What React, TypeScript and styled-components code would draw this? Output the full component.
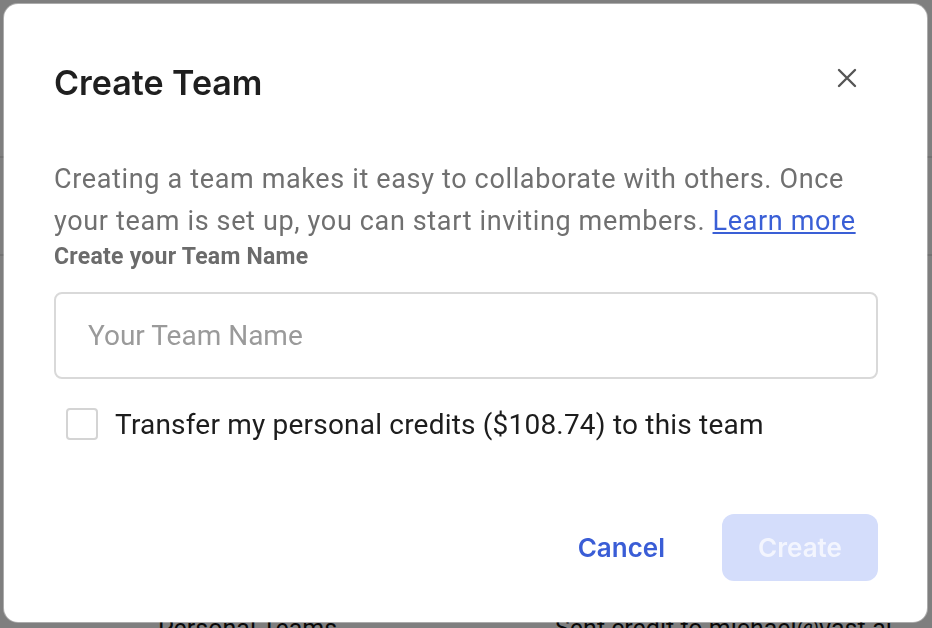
import React from "react";
import styled, { createGlobalStyle } from "styled-components";

const GlobalStyle = createGlobalStyle`
  html, body {
    margin: 0;
    padding: 0;
    background: #ffffff;
    overflow: hidden;
  }
  * { box-sizing: border-box; }
`;

// page behind the dialog (mostly hidden by overlay)
const Page = styled.div`
  width: 932px;
  height: 628px;
  overflow: hidden;
  font-family: Roboto, "Liberation Sans", sans-serif;
  color: #111;
`;

const PageDivider = styled.div<{ $top: number }>`
  margin-top: ${(p) => p.$top}px;
  border-top: 2px solid #e4e4e4;
`;

const PageRow = styled.div`
  display: grid;
  grid-template-columns: 397px 1fr;
  padding: 0 0 0 158px;
  margin-top: 358px;
  font-size: 25px;
  line-height: 30px;
`;

const Overlay = styled.div`
  position: fixed;
  inset: 0;
  background: rgba(0, 0, 0, 0.5);
  padding: 4px 0 0 4px;
  display: flex;
  align-items: flex-start;
`;

const Dialog = styled.div`
  width: 923px;
  height: 618px;
  background: #fff;
  border-radius: 14px;
  box-shadow: 0 0 0 1px rgba(255, 255, 255, 0.35);
  display: flex;
  flex-direction: column;
  padding: 55px 49px 41px 50px;
`;

const Header = styled.div`
  display: flex;
  justify-content: space-between;
  align-items: flex-start;
`;

const Title = styled.h2`
  margin: 0;
  font-family: Inter, "Noto Sans", sans-serif;
  font-weight: 600;
  font-size: 34px;
  line-height: 48px;
  color: #1f1f1f;
`;

const CloseButton = styled.button`
  border: none;
  background: none;
  padding: 0;
  margin: 5px 17px 0 0;
  width: 28px;
  height: 28px;
  display: flex;
  align-items: center;
  justify-content: center;
  cursor: pointer;
`;

const Description = styled.p`
  margin: 51px 0 0;
  font-family: Roboto, "Liberation Sans", sans-serif;
  font-size: 27px;
  line-height: 42px;
  letter-spacing: 0.65px;
  color: #707070;
`;

const LearnMore = styled.a`
  color: #3a5fd6;
  text-decoration: underline;
  text-underline-offset: 2px;
`;

const FieldLabel = styled.label`
  display: block;
  font-family: Roboto, "Liberation Sans", sans-serif;
  font-weight: 700;
  font-size: 23px;
  line-height: 30px;
  letter-spacing: 0.25px;
  color: #6b6b6b;
`;

const TextInput = styled.input`
  display: block;
  margin-top: 20px;
  width: 824px;
  height: 87px;
  border: 2px solid #d9d9d9;
  border-radius: 8px;
  padding: 0 32px;
  font-family: Roboto, "Liberation Sans", sans-serif;
  font-size: 28px;
  color: #222;
  outline: none;
  &::placeholder {
    color: #9a9a9a;
  }
`;

const CheckRow = styled.label`
  display: flex;
  align-items: center;
  gap: 17px;
  margin-top: 25px;
  padding-left: 12px;
  height: 40px;
  font-family: Roboto, "Liberation Sans", sans-serif;
  font-size: 28px;
  letter-spacing: 0.2px;
  color: #1d1d1d;
`;

const CheckBox = styled.span`
  width: 32px;
  height: 32px;
  border: 2px solid #d4d4d4;
  border-radius: 4px;
  flex-shrink: 0;
`;

const Footer = styled.div`
  margin-top: auto;
  display: flex;
  justify-content: flex-end;
  align-items: center;
  gap: 49px;
`;

const Button = styled.button<{ $primary?: boolean }>`
  font-family: Inter, "Noto Sans", sans-serif;
  font-weight: 600;
  font-size: 26px;
  height: 67px;
  border: none;
  border-radius: 12px;
  padding: 0 ${(p) => (p.$primary ? "34px" : "8px")};
  min-width: ${(p) => (p.$primary ? "156px" : "0")};
  background: ${(p) => (p.$primary ? "#d4ddfb" : "transparent")};
  color: ${(p) => (p.$primary ? "#f3f5fe" : "#3a5dd6")};
  cursor: pointer;
`;

export default function App() {
  return (
    <>
      <GlobalStyle />
      <Page>
        <PageDivider $top={156} />
        <PageDivider $top={96} />
        <PageRow>
          <span>Personal Teams</span>
          <span>Sent credit to michael@vast.ai</span>
        </PageRow>
      </Page>
      <Overlay>
        <Dialog>
          <Header>
            <Title>Create Team</Title>
            <CloseButton aria-label="Close">
              <svg width="20" height="20" viewBox="0 0 20 20">
                <path d="M2 2 L18 18 M18 2 L2 18" stroke="#555" strokeWidth="2.4" strokeLinecap="round" />
              </svg>
            </CloseButton>
          </Header>
          <Description>
            Creating a team makes it easy to collaborate with others. Once your team is set up, you can start
            inviting members. <LearnMore href="#">Learn more</LearnMore>
          </Description>
          <FieldLabel>Create your Team Name</FieldLabel>
          <TextInput placeholder="Your Team Name" />
          <CheckRow>
            <CheckBox />
            Transfer my personal credits ($108.74) to this team
          </CheckRow>
          <Footer>
            <Button>Cancel</Button>
            <Button $primary disabled>
              Create
            </Button>
          </Footer>
        </Dialog>
      </Overlay>
    </>
  );
}
